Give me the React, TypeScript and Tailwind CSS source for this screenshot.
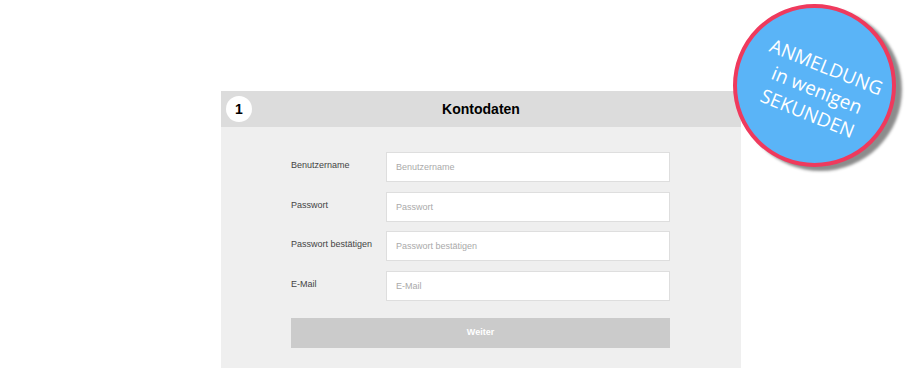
import React from "react";

const fields = [
  { label: "Benutzername", placeholder: "Benutzername", type: "text" },
  { label: "Passwort", placeholder: "Passwort", type: "password" },
  { label: "Passwort bestätigen", placeholder: "Passwort bestätigen", type: "password" },
  { label: "E-Mail", placeholder: "E-Mail", type: "email" },
];

function Badge() {
  return (
    <div className="absolute left-[733px] top-[4px] w-[163px] h-[163px] rounded-full bg-[#5ab4f7] border-[4px] border-[#ef3a5d] shadow-[6px_4px_3px_rgba(0,0,0,0.45)] flex items-center justify-center">
      <div className="rotate-[22deg] translate-x-[2px] translate-y-[5px] text-white text-center font-['Open_Sans',sans-serif] text-[19px] leading-[25px]">
        <p>ANMELDUNG</p>
        <p>in wenigen</p>
        <p>SEKUNDEN</p>
      </div>
    </div>
  );
}

export default function App() {
  return (
    <div className="relative w-full h-[368px] bg-white overflow-hidden font-['Liberation_Sans',sans-serif]">
      <div className="ml-[221px] mt-[91px] w-[520px]">
        <div className="relative h-[36px] bg-[#dcdcdc] flex items-center justify-center">
          <div className="absolute left-[5px] top-[5px] w-[26px] h-[26px] rounded-full bg-white flex items-center justify-center text-[14px] font-bold text-black">
            1
          </div>
          <h1 className="text-[14px] font-bold text-black">Kontodaten</h1>
        </div>
        <div className="bg-[#efefef] h-[260px] pt-[25px] pl-[70px] pr-[71px]">
          <div className="flex flex-col gap-[9.5px]">
            {fields.map((f) => (
              <div key={f.label} className="flex flex-row items-center">
                <label className="w-[95px] text-[9px] text-[#444] -mt-[2px]">{f.label}</label>
                <input
                  type={f.type}
                  placeholder={f.placeholder}
                  className="w-[284px] h-[30px] bg-white border border-[#dedede] px-[9px] text-[9px] text-[#555] placeholder:text-[#aaa] outline-none"
                />
              </div>
            ))}
          </div>
          <button className="mt-[17px] w-[379px] h-[30px] bg-[#cbcbcb] text-white text-[9px] font-bold">
            Weiter
          </button>
        </div>
      </div>
      <Badge />
    </div>
  );
}
